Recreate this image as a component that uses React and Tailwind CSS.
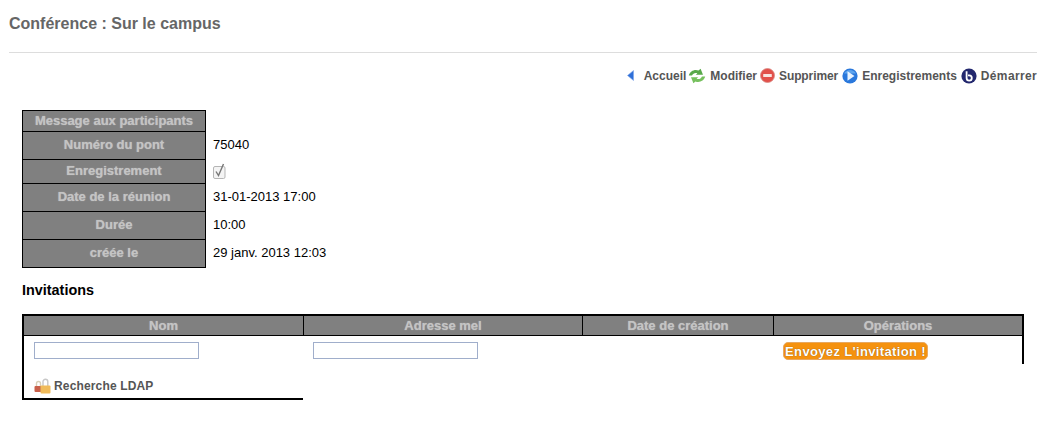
import React from "react";

const Back = () => (
  <svg width="10" height="13" viewBox="0 0 10 13" className="shrink-0">
    <path d="M7.5 1.5V11.5L1.5 6.5Z" fill="#2f6fd8" stroke="#7fa8ea" strokeWidth="0.6" />
  </svg>
);
const Refresh = () => (
  <svg width="18" height="16" viewBox="0 0 18 16" className="shrink-0">
    <path d="M.8 7.5C2 3.2 6.5 1 10.5 2.6L12.6 .8L15 6.8L7.8 6.8L9.4 5.2C7 4.4 5 5.4 4 7.5Z" fill="#58a94a" />
    <path d="M17.2 8.5C16 12.8 11.5 15 7.5 13.4L5.4 15.2L3 9.2L10.2 9.2L8.6 10.8C11 11.6 13 10.6 14 8.5Z" fill="#76c05e" />
  </svg>
);
const Stop = () => (
  <svg width="15" height="15" viewBox="0 0 15 15" className="shrink-0">
    <circle cx="7.5" cy="7.5" r="7" fill="#e2504a" stroke="#d98a84" strokeWidth="0.8" />
    <rect x="3.2" y="6" width="8.6" height="3" rx="0.5" fill="#f8e4e0" />
  </svg>
);
const Play = () => (
  <svg width="16" height="16" viewBox="0 0 16 16" className="shrink-0">
    <circle cx="8" cy="8" r="7.6" fill="#2a78dc" />
    <path d="M2 5.5A7 7 0 0 1 14 5.5Z" fill="#5fa5ee" />
    <path d="M5.5 3.2L12.5 8L5.5 12.8Z" fill="#e8f3ff" />
  </svg>
);
const BBB = () => (
  <svg width="16" height="16" viewBox="0 0 16 16" className="shrink-0">
    <circle cx="8" cy="8" r="7.6" fill="#23286e" />
    <path d="M5.6 3.2V10A2.6 2.6 0 1 0 8.2 7.4H7" fill="none" stroke="#fff" strokeWidth="1.8" />
  </svg>
);
const Lock = () => (
  <svg width="17" height="16" viewBox="0 0 17 16" className="shrink-0">
    <rect x="0.5" y="8" width="7" height="6" rx="1" fill="#c9604a" />
    <path d="M2.5 8V5.5A2 2 0 0 1 6.5 5.5V8" fill="none" stroke="#d8d0b8" strokeWidth="1.4" />
    <path d="M9 8V3.6A2.4 2.4 0 0 1 13.8 3.6V8" fill="none" stroke="#c8c8c8" strokeWidth="1.4" />
    <rect x="6.5" y="7.5" width="10" height="8" rx="1" fill="#f0bb5a" />
  </svg>
);
const Check = () => (
  <svg width="13" height="16" viewBox="0 0 13 16">
    <rect x="0.5" y="3.5" width="11.5" height="12" rx="1.5" fill="#f4f4f4" stroke="#b5b5b5" />
    <path d="M3 8.5L5.5 12.5L10.5 1" fill="none" stroke="#777" strokeWidth="1.4" />
  </svg>
);

const shadow = "[text-shadow:0_0_1px_#b8b8b8]";

const info = [
  ["Message aux participants", null, "h-[21px]", ""],
  ["Numéro du pont", "75040", "h-[28px]", "pb-[2px]"],
  ["Enregistrement", <Check key="c" />, "h-[24px]", "pb-[2px]"],
  ["Date de la réunion", "31-01-2013 17:00", "h-[28px]", "pb-[2px]"],
  ["Durée", "10:00", "h-[28px]", "pb-[2px]"],
  ["créée le", "29 janv. 2013 12:03", "h-[28px]", "pb-[2px]"],
];

const LinkItem = ({ icon, label, className = "" }) => (
  <span className={`flex items-center gap-[4px] ${className}`}>
    {icon}
    <span>{label}</span>
  </span>
);

const Head = ({ w, last, children }) => (
  <div className={`${w} h-full flex items-center justify-center font-bold text-[13px] text-[#c4c4c4] ${shadow} ${last ? "" : "border-r border-black"}`}>
    {children}
  </div>
);

const Field = () => (
  <input className="block w-[165px] h-[17px] bg-white border border-[#a0aecb]" />
);

export default function App() {
  return (
    <div className="bg-white w-[1052px] h-[423px] overflow-hidden pl-[9px] font-['Liberation_Sans',Arial,sans-serif] text-[13px] text-black">
      <div className="w-[1028px]">
        <h1 className="h-[53px] pt-[15px] text-[16px] leading-[18px] font-bold text-[#666] border-b border-[#dddddd]">
          Conférence : Sur le campus
        </h1>
        <div className="mt-[14px] h-[17px] flex items-center justify-end gap-[4px] text-[12px] font-bold text-[#555]">
          <LinkItem icon={<Back />} label="Accueil" className="mr-[-2px] gap-[8px]" />
          <LinkItem icon={<Refresh />} label="Modifier" className="mr-[-1px] gap-[3px]" />
          <LinkItem icon={<Stop />} label="Supprimer" className="tracking-[-0.1px]" />
          <LinkItem icon={<Play />} label="Enregistrements" />
          <LinkItem icon={<BBB />} label="Démarrer" className="tracking-[0.35px]" />
        </div>
      </div>

      <div className="ml-[13px] mt-[26px] flex flex-col w-[400px]">
        <div className="h-px w-[184px] bg-black" />
        {info.map(([k, v, h, p]) => (
          <div key={k} className={`${h} flex`}>
            <div className={`w-[184px] border border-t-0 border-black bg-[#808080] flex items-center justify-center font-bold text-[13px] text-[#c4c4c4] ${shadow} ${p}`}>
              {k}
            </div>
            <div className={`pl-[7px] flex items-center ${p}`}>{v}</div>
          </div>
        ))}

        <h2 className="mt-[13px] h-[18px] leading-[18px] font-bold text-[14.4px]">Invitations</h2>
      </div>

      <div className="ml-[13px] mt-[15px] w-[1002px]">
        <div className="h-[22px] flex border-2 border-black border-b bg-[#808080] box-border">
          <Head w="w-[280px]">Nom</Head>
          <Head w="w-[279px]">Adresse mel</Head>
          <Head w="w-[191px]">Date de création</Head>
          <Head w="flex-1" last>Opérations</Head>
        </div>
        <div className="flex items-start">
          <div className="w-[281px] h-[64px] border-l-2 border-b-2 border-black pl-[10px] pt-[6px]">
            <Field />
            <div className="mt-[18px] flex items-center gap-[3px] text-[12px] font-bold text-[#555] tracking-[0.15px] whitespace-nowrap">
              <Lock />
              <span>Recherche LDAP</span>
            </div>
          </div>
          <div className="flex-1 h-[28px] flex border-r-2 border-black pt-[6px]">
            <div className="w-[279px] pl-[10px]">
              <Field />
            </div>
            <div className="w-[191px]" />
            <button className="ml-[10px] w-[145px] h-[18px] rounded-[5px] bg-[#f5920f] border border-[#e8a860] text-white font-bold text-[13px] leading-[15px] tracking-[0.35px] [text-shadow:0_0_1px_#7a4500] whitespace-nowrap">
              Envoyez L'invitation !
            </button>
          </div>
        </div>
      </div>
    </div>
  );
}
